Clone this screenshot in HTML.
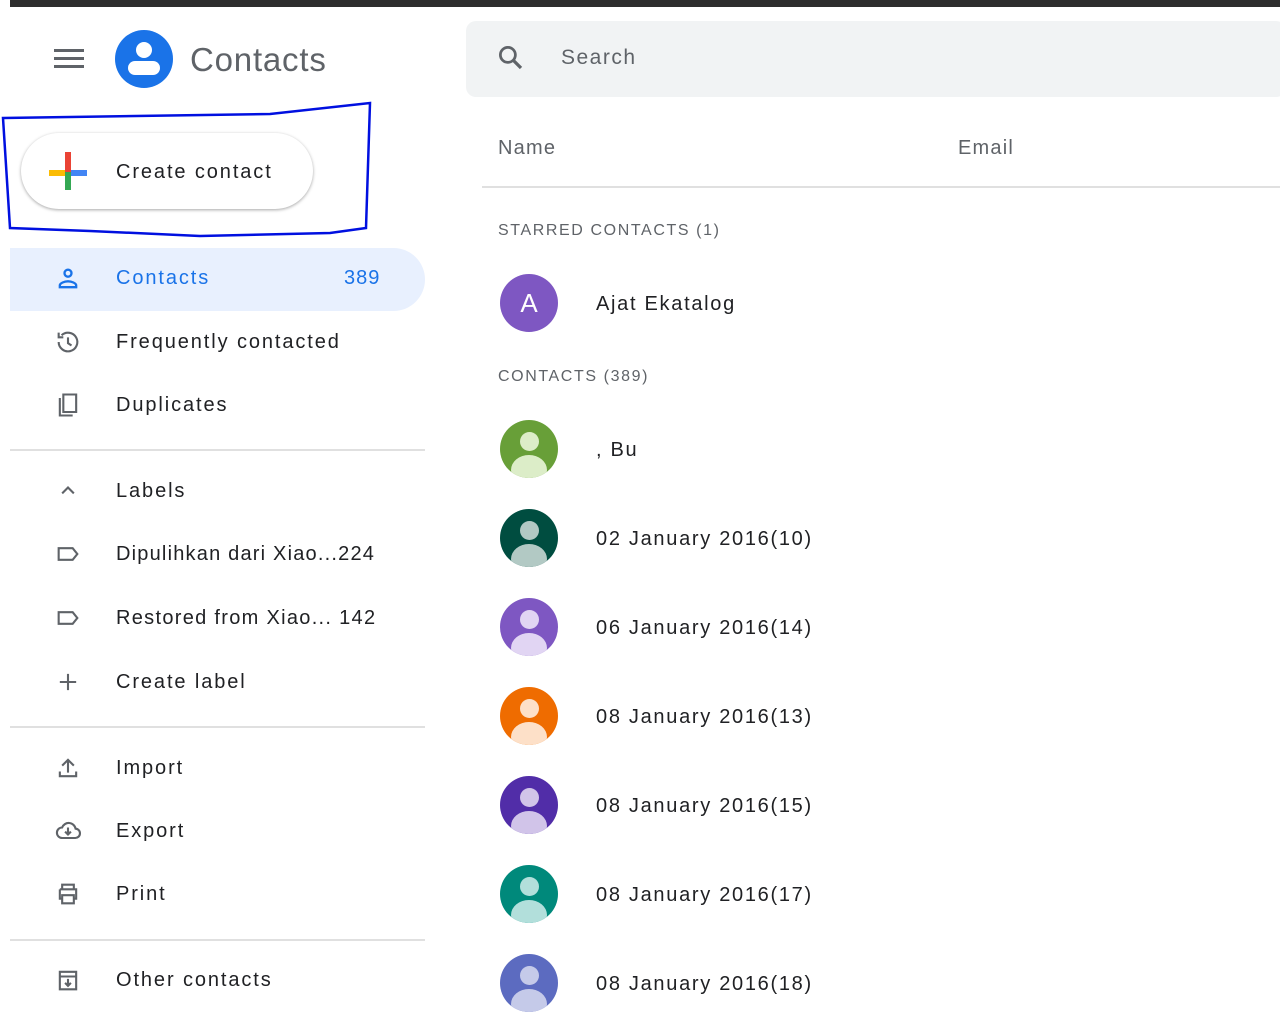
<!DOCTYPE html><html><head><style>
*{margin:0;padding:0;box-sizing:border-box}
body{width:1280px;height:1001px;overflow:hidden;background:#fff;font-family:"Liberation Sans",sans-serif;color:#202124;position:relative}
.a{position:absolute}
.t{position:absolute;font-size:20px;letter-spacing:1.9px;line-height:24px}
.ic{position:absolute;left:54px;width:28px;height:28px}
.hr{position:absolute;left:10px;width:415px;height:2px;background:#e0e0e0}
.av{position:absolute;left:500px;width:58px;height:58px;border-radius:50%;overflow:hidden}
.av i{position:absolute;left:20px;top:12px;width:19px;height:19px;border-radius:50%}
.av b{position:absolute;left:11px;top:35px;width:36px;height:30px;border-radius:50%}
.nm{position:absolute;left:596px;font-size:20px;letter-spacing:1.7px;line-height:24px}
</style></head><body>
<div class="a" style="left:10px;top:0;width:1270px;height:7px;background:#2d2d2d"></div>
<div class="a" style="left:54px;top:49px;width:30px;height:3px;background:#5f6368;box-shadow:0 8px 0 #5f6368,0 16px 0 #5f6368"></div>
<div class="a" style="left:115px;top:30px;width:58px;height:58px;border-radius:50%;background:#1a73e8;overflow:hidden">
<div class="a" style="left:21px;top:12px;width:16px;height:16px;border-radius:50%;background:#fff"></div>
<div class="a" style="left:13px;top:31px;width:32px;height:14px;border-radius:8px;background:#fff"></div></div>
<div class="t" style="left:190px;top:42px;font-size:33px;line-height:36px;color:#5f6368;letter-spacing:0.8px">Contacts</div>
<div class="a" style="left:466px;top:21px;width:820px;height:76px;border-radius:10px;background:#f1f3f4"></div>
<svg class="a" style="left:496px;top:43px" width="30" height="30" viewBox="0 0 24 24"><circle cx="9.5" cy="9.5" r="6" fill="none" stroke="#5f6368" stroke-width="2.2"/><path d="M14 14l6 6" stroke="#5f6368" stroke-width="2.6"/></svg>
<div class="t" style="left:561px;top:46px;color:#5f6368;font-size:21px;letter-spacing:1.5px">Search</div>
<svg class="a" style="left:0;top:100px" width="375" height="140"><path d="M3 18 L270 14 L370 3 L366 128 L330 133 L200 136 L90 131 L10 128 Z" fill="none" stroke="#0010e0" stroke-width="2.5"/></svg>
<div class="a" style="left:21px;top:133px;width:292px;height:76px;border-radius:38px;background:#fff;box-shadow:0 1px 3px rgba(0,0,0,.35)"></div>
<div class="a" style="left:49px;top:170px;width:18px;height:6px;background:#fbbc04"></div>
<div class="a" style="left:67px;top:170px;width:20px;height:6px;background:#4285f4"></div>
<div class="a" style="left:65px;top:152px;width:6px;height:20px;background:#ea4335"></div>
<div class="a" style="left:65px;top:172px;width:6px;height:18px;background:#34a853"></div>
<div class="t" style="left:116px;top:160px">Create contact</div>
<div class="a" style="left:10px;top:248px;width:415px;height:63px;border-radius:0 32px 32px 0;background:#e8f0fe"></div>
<svg class="ic" style="top:265px" viewBox="0 0 24 24"><circle cx="12" cy="7" r="3" fill="none" stroke="#1a73e8" stroke-width="2"/><path d="M5 19v-1.5c0-2 4-3.5 7-3.5s7 1.5 7 3.5V19z" fill="none" stroke="#1a73e8" stroke-width="2"/></svg>
<div class="t" style="left:116px;top:266px;color:#1a73e8">Contacts</div>
<div class="t" style="left:344px;top:266px;color:#1a73e8;letter-spacing:1px">389</div>
<svg class="ic" style="top:328px" viewBox="0 0 24 24"><path d="M4 12a8 8 0 1 0 2.5-5.8M4 4v4h4M12 8v5l3 2" fill="none" stroke="#5f6368" stroke-width="1.8"/></svg>
<div class="t" style="left:116px;top:330px">Frequently contacted</div>
<svg class="ic" style="top:391px" viewBox="0 0 24 24"><path d="M8 3h11v15H8zM5 6v15h11" fill="none" stroke="#5f6368" stroke-width="1.8"/></svg>
<div class="t" style="left:116px;top:393px">Duplicates</div>
<div class="hr" style="top:449px"></div>
<svg class="ic" style="top:477px" viewBox="0 0 24 24"><path d="M7 14l5-5 5 5" fill="none" stroke="#5f6368" stroke-width="1.8"/></svg>
<div class="t" style="left:116px;top:479px">Labels</div>
<svg class="ic" style="top:540px" viewBox="0 0 24 24"><path d="M4 7h12l4 5-4 5H4z" fill="none" stroke="#5f6368" stroke-width="1.8"/></svg>
<div class="t" style="left:116px;top:542px;letter-spacing:1.2px">Dipulihkan dari Xiao...224</div>
<svg class="ic" style="top:604px" viewBox="0 0 24 24"><path d="M4 7h12l4 5-4 5H4z" fill="none" stroke="#5f6368" stroke-width="1.8"/></svg>
<div class="t" style="left:116px;top:606px;letter-spacing:1.3px">Restored from Xiao... 142</div>
<svg class="ic" style="top:668px" viewBox="0 0 24 24"><path d="M12 5v14M5 12h14" stroke="#5f6368" stroke-width="1.8"/></svg>
<div class="t" style="left:116px;top:670px">Create label</div>
<div class="hr" style="top:726px"></div>
<svg class="ic" style="top:754px" viewBox="0 0 24 24"><path d="M12 16V5M7 10l5-5 5 5M5 15v4h14v-4" fill="none" stroke="#5f6368" stroke-width="1.8"/></svg>
<div class="t" style="left:116px;top:756px">Import</div>
<svg class="ic" style="top:817px" viewBox="0 0 24 24"><path d="M7 18h11a4 4 0 0 0 .5-8A6 6 0 0 0 7 9a4.5 4.5 0 0 0 0 9zM12 9v6M9.5 12.5 12 15l2.5-2.5" fill="none" stroke="#5f6368" stroke-width="1.8"/></svg>
<div class="t" style="left:116px;top:819px">Export</div>
<svg class="ic" style="top:880px" viewBox="0 0 24 24"><path d="M7 8V4h10v4M5 8h14v8h-2M7 16H5V8M7 13h10v7H7z" fill="none" stroke="#5f6368" stroke-width="1.8"/></svg>
<div class="t" style="left:116px;top:882px">Print</div>
<div class="hr" style="top:939px"></div>
<svg class="ic" style="top:966px" viewBox="0 0 24 24"><path d="M5 5h14v15H5zM5 9h14M12 11v6M9.5 14.5 12 17l2.5-2.5" fill="none" stroke="#5f6368" stroke-width="1.8"/></svg>
<div class="t" style="left:116px;top:968px">Other contacts</div>
<div class="t" style="left:498px;top:136px;color:#5f6368;letter-spacing:1.2px">Name</div>
<div class="t" style="left:958px;top:136px;color:#5f6368;letter-spacing:1.2px">Email</div>
<div class="a" style="left:482px;top:186px;width:798px;height:2px;background:#e0e0e0"></div>
<div class="t" style="left:498px;top:219px;font-size:16px;letter-spacing:1.6px;color:#5f6368">STARRED CONTACTS (1)</div>
<div class="av" style="top:274px;background:#7e57c2;color:#fff;font-size:26px;text-align:center;line-height:58px">A</div>
<div class="nm" style="top:292px">Ajat Ekatalog</div>
<div class="t" style="left:498px;top:365px;font-size:16px;letter-spacing:1.6px;color:#5f6368">CONTACTS (389)</div>
<div class="av" style="top:420px;background:#689f38"><i style="background:#dcedc8"></i><b style="background:#dcedc8"></b></div><div class="nm" style="top:438px">, Bu</div>
<div class="av" style="top:509px;background:#004d40"><i style="background:#b2c9c4"></i><b style="background:#b2c9c4"></b></div><div class="nm" style="top:527px">02 January 2016(10)</div>
<div class="av" style="top:598px;background:#7e57c2"><i style="background:#e1d5f3"></i><b style="background:#e1d5f3"></b></div><div class="nm" style="top:616px">06 January 2016(14)</div>
<div class="av" style="top:687px;background:#ef6c00"><i style="background:#fde0c8"></i><b style="background:#fde0c8"></b></div><div class="nm" style="top:705px">08 January 2016(13)</div>
<div class="av" style="top:776px;background:#512da8"><i style="background:#d1c4e9"></i><b style="background:#d1c4e9"></b></div><div class="nm" style="top:794px">08 January 2016(15)</div>
<div class="av" style="top:865px;background:#00897b"><i style="background:#b2dfdb"></i><b style="background:#b2dfdb"></b></div><div class="nm" style="top:883px">08 January 2016(17)</div>
<div class="av" style="top:954px;background:#5c6bc0"><i style="background:#c5cae9"></i><b style="background:#c5cae9"></b></div><div class="nm" style="top:972px">08 January 2016(18)</div>
</body></html>
